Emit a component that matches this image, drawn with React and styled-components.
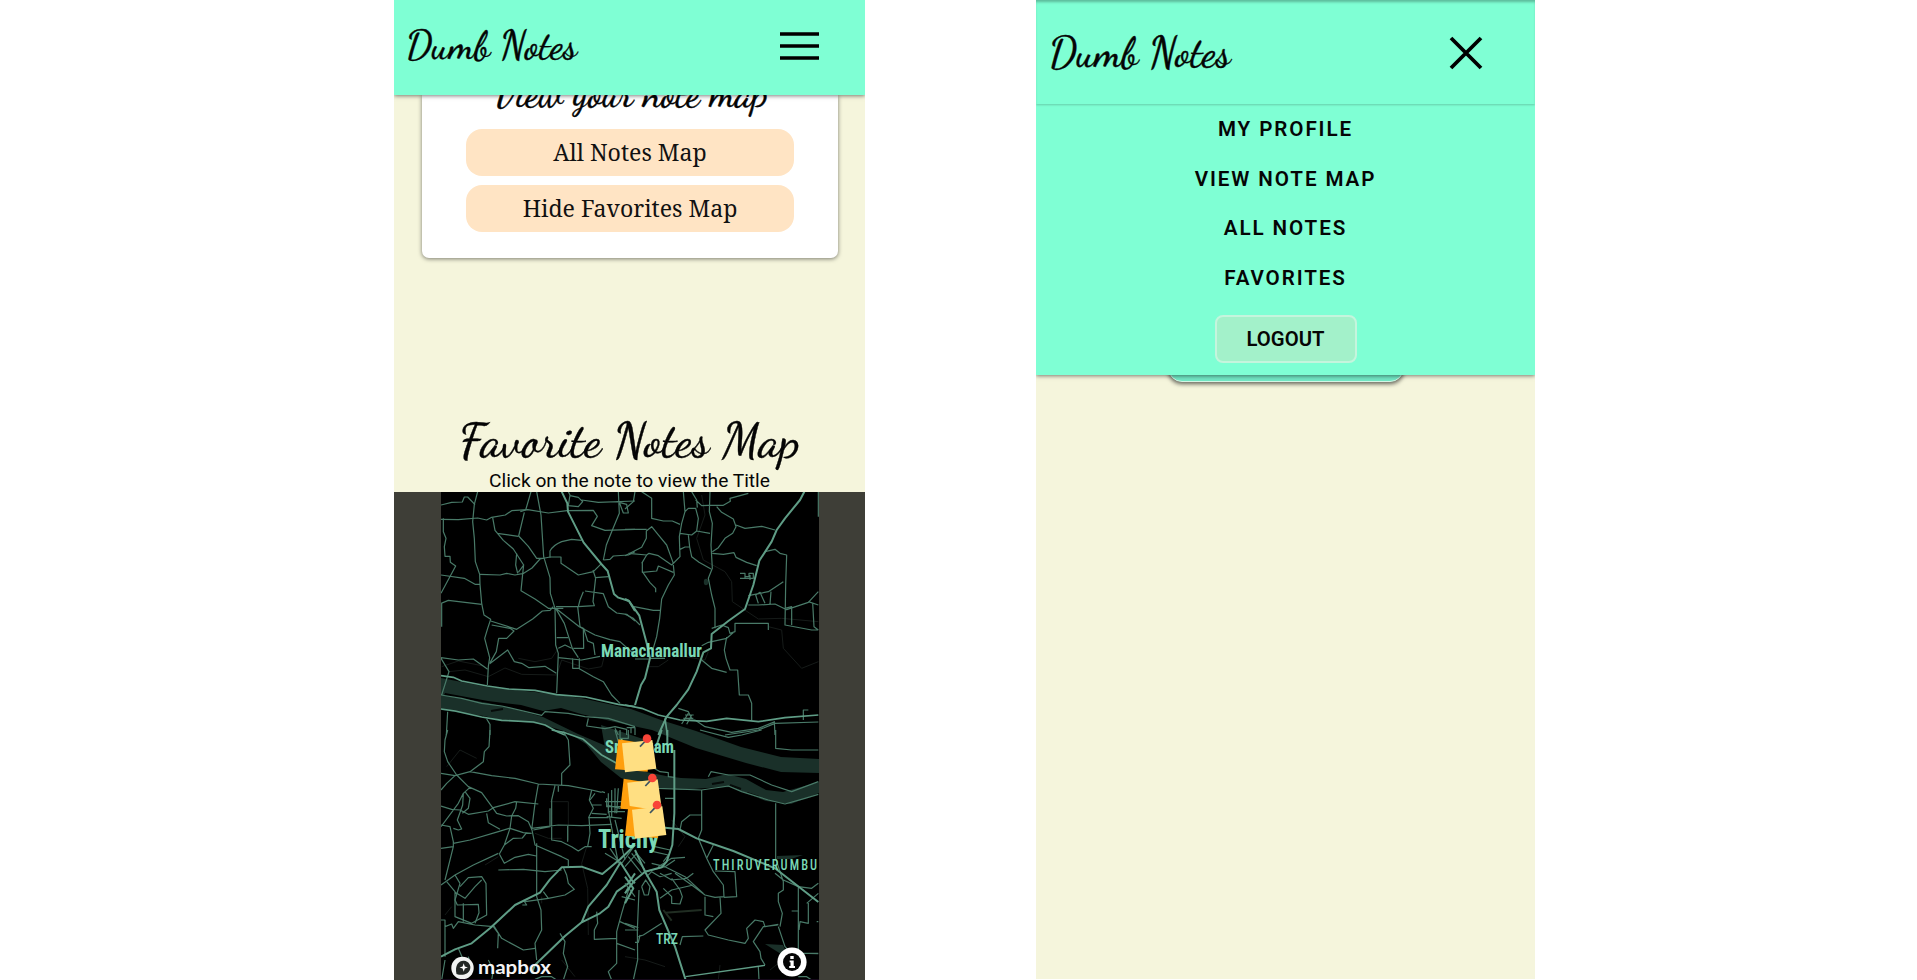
import React from 'react';
import styled, { createGlobalStyle } from 'styled-components';

const Global = createGlobalStyle`
  * { box-sizing: border-box; }
  body { margin: 0; background: #fff; color: #050505; font-family: Roboto, "Liberation Sans", sans-serif; overflow: hidden; }
`;

const Page = styled.main`
  display: flex;
  align-items: flex-start;
  gap: 171px;
  height: 980px;
  padding-left: 394px;
`;

const Phone = styled.section`
  width: ${(p) => p.$width}px;
  height: ${(p) => p.$height}px;
  background: #f5f5dc;
  overflow: hidden;
  display: flex;
  flex-direction: column;
`;

const Header = styled.header`
  position: relative;
  z-index: 2;
  flex: none;
  height: ${(p) => p.$height}px;
  padding: ${(p) => p.$pad};
  display: flex;
  align-items: center;
  justify-content: space-between;
  background: #7fffd4;
  box-shadow: ${(p) => (p.$open
    ? '0 1px 2px rgba(0, 0, 0, 0.2), inset 0 3px 3px -1px rgba(0, 0, 0, 0.28)'
    : '0 1px 4px rgba(0, 0, 0, 0.5)')};
`;

const Script = styled.div`
  font-family: "Dancing Script", "Liberation Serif", serif;
  font-weight: 500;
  font-size: ${(p) => p.$size}px;
  line-height: ${(p) => p.$line || 48}px;
  white-space: nowrap;
  -webkit-text-stroke: 0.35px currentColor;
`;

const MapCard = styled.div`
  flex: none;
  width: 416px;
  height: 163px;
  margin: 0 0 0 28px;
  display: flex;
  flex-direction: column;
  align-items: center;
  background: #fff;
  border-radius: 0 0 7px 7px;
  box-shadow: 0 1px 4px rgba(0, 0, 0, 0.5);
`;

const CardTitle = styled.div`
  flex: none;
  height: 34px;
  display: flex;
  align-items: flex-end;
  justify-content: center;
  padding-bottom: 11px;
`;

const MapButton = styled.button`
  flex: none;
  width: 328px;
  height: 47px;
  margin-bottom: 9px;
  padding: 0 0 2px;
  border: 0;
  border-radius: 16px;
  background: #ffe4c4;
  color: #111;
  font: 23.1px "Noto Serif", "Droid Serif", "DejaVu Serif", serif;
`;

const MapHeading = styled.div`
  flex: none;
  height: 234px;
  display: flex;
  flex-direction: column;
  align-items: center;
  justify-content: flex-end;
`;

const Hint = styled.p`
  margin: 0;
  font-size: 19.2px;
  line-height: 22px;
`;

const MapFrame = styled.div`
  flex: 1;
  display: flex;
  justify-content: center;
  background: #3e3e37;
`;

const Menu = styled.nav`
  position: relative;
  z-index: 1;
  flex: none;
  height: 271px;
  padding-top: 1px;
  display: flex;
  flex-direction: column;
  align-items: center;
  background: #7fffd4;
  box-shadow: 0 1px 4px rgba(0, 0, 0, 0.5);
`;

const MenuLink = styled.a`
  height: 49.6px;
  line-height: 49.6px;
  font-size: 20.6px;
  font-weight: 600;
  letter-spacing: 1.9px;
`;

const Logout = styled.button`
  width: 142px;
  height: 48px;
  margin-top: 12px;
  border: 2px solid #c5f5dd;
  border-radius: 8px;
  background: #a3f1ca;
  color: #050505;
  font: 600 20.3px Roboto, sans-serif;
`;

const HiddenButton = styled.div`
  flex: none;
  align-self: center;
  width: 236px;
  height: 30px;
  margin-top: -23px;
  background: #72e8c5;
  border: 1.5px solid #d4f7e5;
  border-radius: 14px;
  box-shadow: 0 2px 4px rgba(0, 0, 0, 0.6);
`;

const Minor = ({ d }) => <path d={d} stroke="#497a68" strokeWidth="3.6" />;
const Major = ({ d, w = 6 }) => <path d={d} stroke="#5f9d86" strokeWidth={w} />;
const Faint = ({ d }) => <path d={d} stroke="#161b19" strokeWidth="3" />;

const Note = ({ x, y }) => (
  <g transform={`translate(${x} ${y})`}>
    <path d="M10 0L0 90L98 97L104 15Z" fill="#ff9f0d" />
    <path d="M21 12L112 2L124 88L30 99Z" fill="#ffdf82" />
    <path d="M75 22L91 5" stroke="#3c5360" strokeWidth="5" />
    <circle cx="96" cy="-2" r="13" fill="#f84438" />
  </g>
);

const Label = styled.text`
  font-family: "Roboto Condensed", Roboto, sans-serif;
  fill: #7bd9b6;
`;

const StreetMap = () => (
  <svg width="378" height="488" viewBox="0 0 378 488" fill="none" strokeLinejoin="round" style={{ background: '#000' }}>
    <g fill="#1a3029">
      <path d="M0 186L47 195L94 200L140 206L190 217L220 228L255 239L300 255L340 265L378 267V281L340 280L305 271L255 256L211 238L178 231L140 222L120 216L102 219L80 213L47 209L4 201L0 211Z" />
      <path d="M0 203L47 211L69 216L102 225L137 242L165 254L185 268L205 280L225 284L240 286L265 287L286 282L305 287L325 298L342 300L378 290V301L350 312L325 309L290 295L265 296L240 298L205 294L180 286L160 270L145 252L126 240L100 232L60 228L43 224L0 218Z" />
      <path d="M160 233L202 247L210 270L180 277L165 262Z" />
      <path d="M324 452L342 453L345 460L340 462Z" />
      <ellipse cx="265" cy="90" rx="2.2" ry="3.3" />
      <path d="M336 364L362 363L350 367H336Z" />
    </g>
    <path d="M271 292L283 290M289 293L300 297M306 301L318 305M50 219L62 217" stroke="#060b09" strokeWidth="2" />
    <g transform="translate(-6 -7) scale(.33333)">
      <Faint d="M20 545L70 528L145 543M40 560L90 555L160 575L210 549L260 568L365 570L380 525L460 552L500 545L510 505M250 520L300 530L350 520L370 490" />
      <Minor d="M18 60L50 52L82 51L88 36H98L120 59M128 20L118 58L113 110L118 160L121 230L134 268L135 298L140 355L147 390L167 403L158 430L149 460L164 518L160 545L157 600" />
      <Minor d="M18 103L70 104L128 99L155 105L170 97L211 90L230 77L278 74L340 84L396 77L475 76L487 94L470 122L510 136L600 133" />
      <Minor d="M288 20L272 75L256 80M305 20L318 90L326 215L345 278L346 325L360 370M268 82L251 153L280 184L305 220H325" />
      <Minor d="M173 98L180 136L205 166L235 192L266 240L250 262M187 145L250 154M266 238L258 317L300 342L340 370H385M135 268L195 270L215 265L240 270L266 265L291 249L315 222L345 216H378V235L430 270L475 260L500 235" />
      <Minor d="M245 205L242 240L248 265M345 218V198Q355 180 380 170L410 163L440 166M25 100V140L33 160L28 185L30 214H45L46 232L62 243L18 325M18 270L88 280L120 298H135M18 355L40 346L140 358M20 356V425" />
      <Minor d="M355 365L345 376L322 378L293 402L245 433L167 408M170 420L225 430L237 438L215 460H191L184 500L164 535M164 536L218 495L238 530L260 535L282 548L330 544L364 565M360 370L362 480L370 505L365 625M362 370L388 415L412 490L430 518M362 370L433 425L480 450L525 464L555 470L600 510" />
      <Minor d="M363 365L430 365L478 362L474 350L482 278L520 275M428 365L435 425L445 430L446 490H415M445 320L435 345L430 365M450 318L505 326L520 365L545 384L575 388L600 408M474 255L482 280M505 225L514 180L530 140L553 85L550 20M505 225L525 223L535 213L580 210L600 200M446 430L458 468L475 475L480 510M370 490L390 480L410 490M365 458H400M370 518L440 525L495 514M413 520V550H433V520M433 551L475 575L505 590L530 630L555 655M400 20L405 30L400 62L430 65L443 50L430 37L405 32M545 50L575 58L580 84H565L554 55M440 45L490 52L600 48" />
      <Minor d="M18 518L70 525L115 522L158 553M18 520L42 560L20 630M18 630L80 640L140 655L200 663L320 691L330 680L400 685L450 695L520 700L600 725M38 680L34 750M155 702L165 718V750M460 700L455 723L510 731L540 725L575 733V750M540 730L550 750" />
      <Major d="M380 20L397 55L399 80L446 173L499 237L518 258L537 327L550 338L582 348L600 378" />
      <Major w={5} d="M18 572L55 577L80 588L157 603L220 612L300 616L365 629L452 636L550 658L600 665M18 672L60 678L140 696L200 706L295 711L330 720L370 742L390 750" />
    </g>
    <g transform="translate(184 -7) scale(.33333)">
      <Faint d="M230 30L240 90L215 160L235 225L300 260L320 290L322 350L400 402L470 400L580 410M430 425L470 435L475 490L530 550L580 530M130 525L100 545H70M250 500L240 525L150 510" />
      <Minor d="M0 72L25 50L30 20M50 20L80 40V100L115 108L142 108L165 118M0 133H65M0 212L50 187L64 160V138L80 125L100 150L125 180L145 235M10 205L65 210L72 205L100 212L140 240L165 215L163 155L170 115L180 80L175 20M180 80L190 70L212 70L220 100L215 138L200 150L165 145M165 193L180 186L194 186L190 150M215 138L255 145M194 186L200 215L222 232L258 252" />
      <Minor d="M200 20L215 45L217 68M212 45L230 62L250 61H295L316 49L315 40L370 25M255 20L253 80L262 115L258 180L262 250L250 280L260 330L270 370V430M275 65L290 82L325 102L333 125L323 145L300 160L280 188L262 200M333 120L360 130L410 124L450 135M262 205L295 208L327 203L333 217L365 232L395 242M50 235L65 210M52 232V262L95 258L100 243L145 262M52 260L75 293L92 310V322M145 240L148 270L130 300L110 342L104 400L95 455L82 500M27 365L85 376H107M0 388L25 400L45 420" />
      <Minor d="M260 430L290 420L310 428L315 445L330 440V415H430V435M230 482L250 472L305 460L325 443M305 456L298 495L303 520L315 555H338L343 630H370L380 655V705M230 525L260 550L305 562M420 200L450 193L465 205L485 210L482 300L480 420L560 435H580M370 360H400L450 357L485 374L550 352L580 320M480 370L500 365L500 420M550 350L580 360M563 353L567 425L580 435M400 355L392 330L405 322L420 355M370 332L405 325L430 320L475 290M438 320L435 357M345 265H360V280H345M360 275H372V265H385V280H360M375 270V285" />
      <Minor d="M30 522H75M75 520H120M160 670L190 680L200 700M180 690H206M175 700H205M170 717L190 685M185 718L200 690M195 705H210M5 728H30V750M18 728V745M210 705L240 725L320 742L400 730L450 710M448 710L450 750M535 705V675H550M300 750L400 735L450 715L580 711M580 20V95" />
      <Major d="M538 20L525 45L480 100L455 135L440 170L403 227L385 300L360 372L310 408L260 447L258 490L235 502L215 560L190 613L155 660L125 695L100 750M0 342L12 348L43 392L53 430L65 475L75 520L60 580L48 600L30 660" />
      <Major w={5} d="M0 660L50 670L100 690L165 705L245 709L305 700L400 710L480 698L580 690M120 700L127 750" />
    </g>
    <g transform="translate(-6 238) scale(.33333)">
      <Faint d="M35 110L75 60L125 85M345 215H400V330M300 310L340 325L380 325M190 380L150 405M455 350L440 400L458 475L460 615M30 555L50 530M320 500V520M380 690L420 740" />
      <Minor d="M38 0L30 30L28 65L38 95L65 135L100 170L140 188L175 236L185 250L215 258L250 257L280 275L291 300L300 345L380 380L400 390V408M18 130L60 137L105 125L170 137L240 145L310 162L400 167L470 180L500 187M165 0L162 50L148 65L145 95L105 125M385 5L400 30L405 105L380 130V165M60 137L35 160L18 180M105 172L85 190L70 220L18 290M85 190L83 225L67 270L80 297L70 300L55 295M90 185L105 205L100 235L82 250M18 228L50 238L75 240L100 253L160 243L175 233L240 215L310 222M245 215L242 235L230 258L225 295L208 345L193 372M155 250L160 278L195 298M55 340L105 330L190 305L225 294M225 295L265 308L290 310M193 372L208 400L240 382L280 373L304 378M208 345L235 325L262 324L275 308M18 355L55 350L55 335L45 290L18 285M55 350L30 450M18 465L60 435L115 405L190 370M60 435L75 460L60 510L67 525L130 523L132 548L120 580M310 162L300 220L290 300M305 340V500L318 540L320 600L300 640L305 690M360 167L350 210V330L380 335L410 350L430 363L450 350L470 350M345 235V290L295 300M290 295L370 285L440 287L530 283M370 185V168M398 285V335M470 180L463 210L475 235L462 260L465 310L458 350" />
      <Minor d="M35 455L60 485V560L110 580L155 555L153 460L140 440L100 443L75 470M60 487L90 505L120 470L140 450M85 520V575M18 570H30V680M30 590L50 582L55 595L70 575L120 585L175 590L190 610L188 655M175 585L200 625L265 660L300 655M190 420L265 418L330 425L380 420M270 515L340 505L390 495L418 478L400 460L395 435L385 412M325 485L340 505M265 510L275 525L262 525M375 610L390 635L385 670L398 710L385 750M300 748L320 740H350L365 750M485 545L488 580L478 600V628L545 625V700L520 725L530 750M585 465L560 550L545 605V625M555 575L600 595M545 640L600 660M560 500L600 510M70 655L85 690M100 680L110 720L85 740M160 690L175 720L170 750M30 690L20 750M465 210L480 190M470 225H500M470 250L515 253M460 263H520M500 185L510 188" />
      <Minor d="M510 215H600M515 205V230H600M520 190V250M530 180V260M540 175V250M550 175L545 250M515 225L555 235M520 245H570M515 260L560 265M540 0L560 70L575 100M555 0V25H580V0M520 240L550 400M540 270L570 390M510 370L560 400L600 345M525 355L555 400" />
      <Major d="M18 680L60 658L110 640L165 595L240 525L315 488L345 448L380 412L440 410L502 432L555 388L600 345M555 400L515 465L460 530L440 577M555 395L590 450L600 460M600 430L580 460L545 485L520 530L495 550L440 577L390 618L300 705L290 730" />
      <Major w={5} d="M350 0L390 8L445 28L500 75L545 100L570 110" />
    </g>
    <g transform="translate(184 238) scale(.33333)">
      <Faint d="M140 270L180 320L160 350M285 705L280 750M0 680L60 690L120 710M435 720L460 700" />
      <Minor d="M225 0L310 22L350 15L410 0M452 0V55L500 60H580M230 180V300L220 325L245 385L265 425L295 465L297 500L270 502L240 495L200 465L150 430M230 255H195L170 275L165 300M120 205H150M250 140L258 125L310 135L375 135L440 165L500 185L580 155M100 175L230 180L310 168L350 185L430 210L480 222L540 205L580 193M452 220V385L475 455V480L460 490V515L472 550L465 590M80 110L105 125L130 128V140L148 142M90 350L135 360M85 365L130 375L115 395M100 410L140 385L180 382M60 425L120 410L180 440L235 490M105 430L140 450L185 445L205 430M65 440L80 425L105 440L140 430M115 475L140 500V520L165 522L172 500L165 480L140 445M105 505L140 480L205 465M50 470L58 495L70 495L75 470L62 450L50 470M265 345L245 385M270 423L330 425L335 500L297 502M240 500V555L265 560M285 500L288 550L240 600L250 615L310 630L360 640L370 625L365 595L390 570L415 575L420 590L460 583M460 585L415 590L385 635L405 665L408 685L420 705M460 590L480 650L500 670M450 430L475 450L520 470L560 475L580 460M520 470V670H580M550 515V580L525 575L522 600M545 520L580 490M500 543H520M575 575H580M0 580L40 593M0 460L30 500M42 480L37 600L38 690L25 750M40 620L55 615L110 580M45 615L40 637L30 637M0 600L40 600M165 645L172 620L235 618M400 710L402 750M520 740H545L560 750M550 670L580 671" />
      <Minor d="M0 410L35 370L60 400M10 380L50 430M80 400L120 410L150 390M20 370L60 420M0 490L10 470" />
      <Major d="M148 60V250L142 345L125 395L110 412L60 425L30 450L0 490M30 360L60 425L95 485L103 540L150 650L182 750M0 440L25 475L0 520M127 0V45M110 0L90 60" />
      <Major d="M120 293L160 297L215 325L325 363L450 415L580 516" />
      <Major w={4} d="M182 740L420 706" />
      <path d="M120 548L230 540M115 540L140 572" stroke="#202d22" strokeWidth="6" />
    </g>
    <Label x="160" y="165" fontSize="18" fontWeight="700" textLength="101" lengthAdjust="spacingAndGlyphs">Manachanallur</Label>
    <Label x="164" y="261" fontSize="17.5" fontWeight="700" textLength="69" lengthAdjust="spacingAndGlyphs">Srirangam</Label>
    <Label x="157" y="356" fontSize="26" fontWeight="700" textLength="61" lengthAdjust="spacingAndGlyphs">Trichy</Label>
    <g transform="translate(272 378) scale(.84 1)">
      <Label fontSize="14.8" fontWeight="500" textLength="124" lengthAdjust="spacing">THIRUVERUMBU</Label>
    </g>
    <Label x="215" y="452" fontSize="15" fontWeight="500" textLength="22" lengthAdjust="spacingAndGlyphs">TRZ</Label>
    <g transform="translate(149 228) scale(.33333)">
      <Note x={75} y={58} />
      <Note x={91} y={176} />
      <Note x={105} y={257} />
    </g>
    <circle cx="21.5" cy="476" r="11.2" fill="#f1f3f2" />
    <path d="M15.5 482C13.5 473 18 468.5 23 468.8C27.5 469 30.5 473.5 29 477.5C27.5 482.5 21 484 15.5 482Z" fill="#222725" />
    <path d="M22.7 471.3L23.8 474.4L26.9 475.5L23.8 476.6L22.7 479.7L21.6 476.6L18.5 475.5L21.6 474.4Z" fill="#fff" />
    <text x="37" y="481.5" fontFamily="Lato" fontSize="19.5" fontWeight="700" fill="#f4f4f4" textLength="73" lengthAdjust="spacingAndGlyphs">mapbox</text>
    <circle cx="351" cy="470" r="14.6" fill="#fff" />
    <circle cx="351" cy="470" r="9" fill="#050505" />
    <path d="M349.3 464H352.7V467H349.3ZM348.6 468.5H352.7V474H354V476H348.2V474H349.5V470.2H348.6Z" fill="#fff" />
    <path d="M0 487.5H378" stroke="#15081a" />
  </svg>
);

export default function App() {
  return (
    <>
      <Global />
      <Page>
        <Phone $width={471} $height={980}>
          <Header $height={95} $pad="0 46px 3px 12px">
            <Script $size={39.2}>Dumb Notes</Script>
            <svg width="39" height="28" viewBox="0 0 39 28" stroke="#000" strokeWidth="3.6"><path d="M0 2H39M0 14H39M0 26H39" /></svg>
          </Header>
          <MapCard>
            <CardTitle><Script $size={38.8}>View your note map</Script></CardTitle>
            <MapButton>All Notes Map</MapButton>
            <MapButton>Hide Favorites Map</MapButton>
          </MapCard>
          <MapHeading>
            <Script $size={48.8} $line={58}>Favorite Notes Map</Script>
            <Hint>Click on the note to view the Title</Hint>
          </MapHeading>
          <MapFrame><StreetMap /></MapFrame>
        </Phone>
        <Phone $width={499} $height={979}>
          <Header $open $height={104} $pad="1px 52px 0 13px">
            <Script $size={41.6}>Dumb Notes</Script>
            <svg width="34" height="34" viewBox="0 0 34 34" stroke="#000" strokeWidth="3.8"><path d="M2 2L32 32M32 2L2 32" /></svg>
          </Header>
          <Menu>
            <MenuLink>MY PROFILE</MenuLink>
            <MenuLink>VIEW NOTE MAP</MenuLink>
            <MenuLink>ALL NOTES</MenuLink>
            <MenuLink>FAVORITES</MenuLink>
            <Logout>LOGOUT</Logout>
          </Menu>
          <HiddenButton />
        </Phone>
      </Page>
    </>
  );
}
